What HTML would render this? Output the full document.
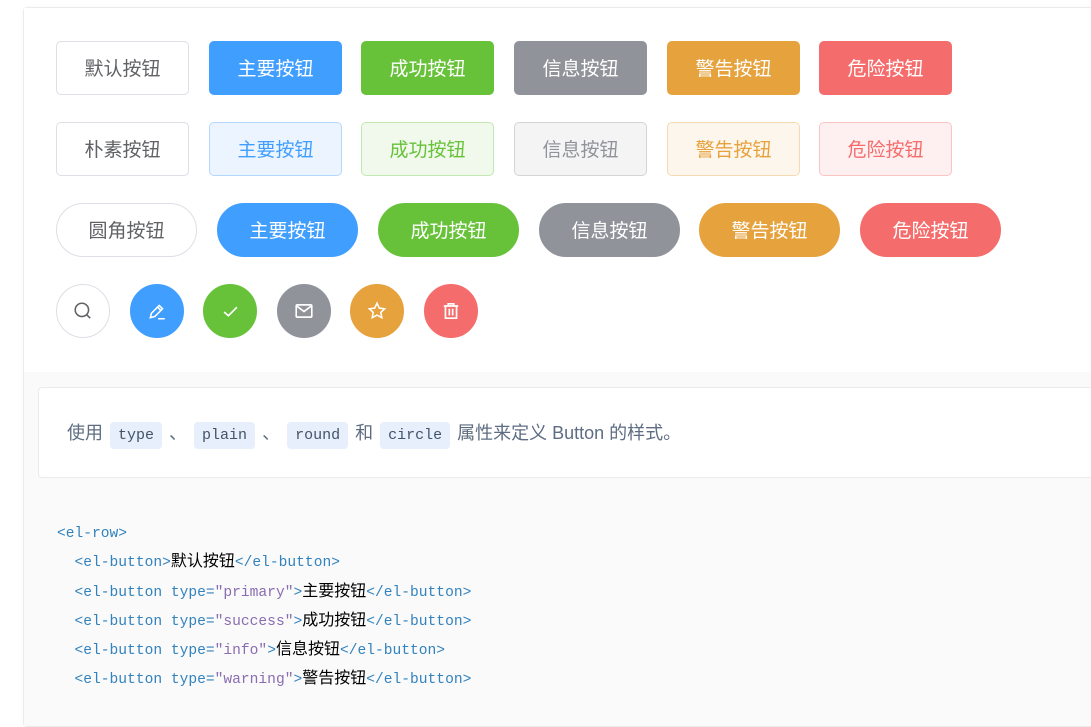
<!DOCTYPE html>
<html><head><meta charset="utf-8"><style>
body{margin:0;width:1091px;height:696px;overflow:hidden;background:#fff;font-family:"Liberation Sans","Noto Sans CJK SC",sans-serif;}
.card{position:absolute;left:23px;top:7px;width:1100px;height:720px;border:1px solid #ebebeb;border-radius:4px;box-sizing:border-box;box-shadow:0 0 6px rgba(0,0,0,.03)}
.demo{position:absolute;left:0;top:0;right:0;height:364px;border-bottom:1px solid #e6ecf5;background:#fff}
.b{position:absolute;height:54px;box-sizing:border-box;border:1px solid #dcdfe6;border-radius:5px;font-size:19px;line-height:52px;padding-top:2px;text-align:center;color:#606266;background:#fff}
.r{border-radius:27px}
.c{width:54px;border-radius:50%;display:flex;align-items:center;justify-content:center;padding-top:0}
.p{background:#409eff;border-color:#409eff;color:#fff}
.s{background:#67c23a;border-color:#67c23a;color:#fff}
.i{background:#909399;border-color:#909399;color:#fff}
.w{background:#e6a23c;border-color:#e6a23c;color:#fff}
.d{background:#f56c6c;border-color:#f56c6c;color:#fff}
.pp{background:#ecf5ff;border-color:#b3d8ff;color:#409eff}
.sp{background:#f0f9eb;border-color:#c2e7b0;color:#67c23a}
.ip{background:#f4f4f5;border-color:#d3d4d6;color:#909399}
.wp{background:#fdf6ec;border-color:#f5dab1;color:#e6a23c}
.dp{background:#fef0f0;border-color:#fbc4c4;color:#f56c6c}
.meta{position:absolute;left:0;top:364px;right:0;bottom:0;background:#fafafa}
.desc{position:absolute;left:14px;top:15px;width:1100px;height:91px;background:#fff;border:1px solid #ebebeb;border-radius:4px;box-sizing:border-box;font-size:18px;color:#5e6d82;padding-left:28px;line-height:89px;padding-top:1px}
.desc code{font-family:"Liberation Mono",monospace;font-size:15px;background:#e6effb;color:#445368;padding:5px 8px;border-radius:4px;margin:0 2px}
pre{position:absolute;left:33px;top:148px;margin:0;font-family:"Liberation Mono","Noto Sans CJK SC",monospace;font-size:14.6px;line-height:29.3px;color:#3182bd}
pre div{height:29.3px;line-height:29.3px;white-space:pre}
pre b{font-weight:normal;color:#000;font-family:"Liberation Sans","Noto Sans CJK SC",sans-serif;font-size:16px;line-height:1}
pre em{font-style:normal;color:#8a6cb0}
</style></head><body>
<div class="card">
<div class="demo">
<div class="b" style="left:32px;top:33px;width:133px">默认按钮</div>
<div class="b p" style="left:185px;top:33px;width:133px">主要按钮</div>
<div class="b s" style="left:337px;top:33px;width:133px">成功按钮</div>
<div class="b i" style="left:490px;top:33px;width:133px">信息按钮</div>
<div class="b w" style="left:643px;top:33px;width:133px">警告按钮</div>
<div class="b d" style="left:795px;top:33px;width:133px">危险按钮</div>

<div class="b" style="left:32px;top:114px;width:133px">朴素按钮</div>
<div class="b pp" style="left:185px;top:114px;width:133px">主要按钮</div>
<div class="b sp" style="left:337px;top:114px;width:133px">成功按钮</div>
<div class="b ip" style="left:490px;top:114px;width:133px">信息按钮</div>
<div class="b wp" style="left:643px;top:114px;width:133px">警告按钮</div>
<div class="b dp" style="left:795px;top:114px;width:133px">危险按钮</div>

<div class="b r" style="left:32px;top:195px;width:141px">圆角按钮</div>
<div class="b r p" style="left:193px;top:195px;width:141px">主要按钮</div>
<div class="b r s" style="left:354px;top:195px;width:141px">成功按钮</div>
<div class="b r i" style="left:515px;top:195px;width:141px">信息按钮</div>
<div class="b r w" style="left:675px;top:195px;width:141px">警告按钮</div>
<div class="b r d" style="left:836px;top:195px;width:141px">危险按钮</div>

<div class="b c" style="left:32px;top:276px"><svg width="20" height="20" viewBox="0 0 18 18" fill="none" stroke="#606266" stroke-width="1.4"><circle cx="8" cy="8" r="6"/><path d="M12.5 12.5l3 3"/></svg></div>
<div class="b c p" style="left:106px;top:276px"><svg width="20" height="20" viewBox="0 0 18 18" fill="none" stroke="#fff" stroke-width="1.4"><path d="M3 15l1-4 7-7 3 3-7 7z M9.5 5.5l3 3 M10 16h6"/></svg></div>
<div class="b c s" style="left:179px;top:276px"><svg width="17" height="17" viewBox="0 0 16 16" fill="none" stroke="#fff" stroke-width="1.5"><path d="M2 8.5l4 3.5 8-8"/></svg></div>
<div class="b c i" style="left:253px;top:276px"><svg width="20" height="20" viewBox="0 0 18 18" fill="none" stroke="#fff" stroke-width="1.5"><rect x="2" y="3.5" width="14" height="11" rx="1"/><path d="M2.5 4.5l6.5 5 6.5-5"/></svg></div>
<div class="b c w" style="left:326px;top:276px"><svg width="20" height="20" viewBox="0 0 18 18" fill="none" stroke="#fff" stroke-width="1.4"><path d="M9 2l2.1 4.4 4.8.6-3.5 3.3.9 4.7L9 12.7 4.7 15l.9-4.7L2.1 7l4.8-.6z"/></svg></div>
<div class="b c d" style="left:400px;top:276px"><svg width="20" height="20" viewBox="0 0 18 18" fill="none" stroke="#fff" stroke-width="1.5"><path d="M2.5 4.5h13 M6.5 4.5V2.5h5v2 M4 4.5v11h10v-11 M7.5 7v6 M10.5 7v6"/></svg></div>
</div>
<div class="meta">
<div class="desc">使用 <code>type</code> 、 <code>plain</code> 、 <code>round</code> 和 <code>circle</code> 属性来定义 Button 的样式。</div>
<pre><div>&lt;el-row&gt;</div><div>  &lt;el-button&gt;<b>默认按钮</b>&lt;/el-button&gt;</div><div>  &lt;el-button type=<em>"primary"</em>&gt;<b>主要按钮</b>&lt;/el-button&gt;</div><div>  &lt;el-button type=<em>"success"</em>&gt;<b>成功按钮</b>&lt;/el-button&gt;</div><div>  &lt;el-button type=<em>"info"</em>&gt;<b>信息按钮</b>&lt;/el-button&gt;</div><div>  &lt;el-button type=<em>"warning"</em>&gt;<b>警告按钮</b>&lt;/el-button&gt;</div></pre>
</div>
</div>
</body></html>
